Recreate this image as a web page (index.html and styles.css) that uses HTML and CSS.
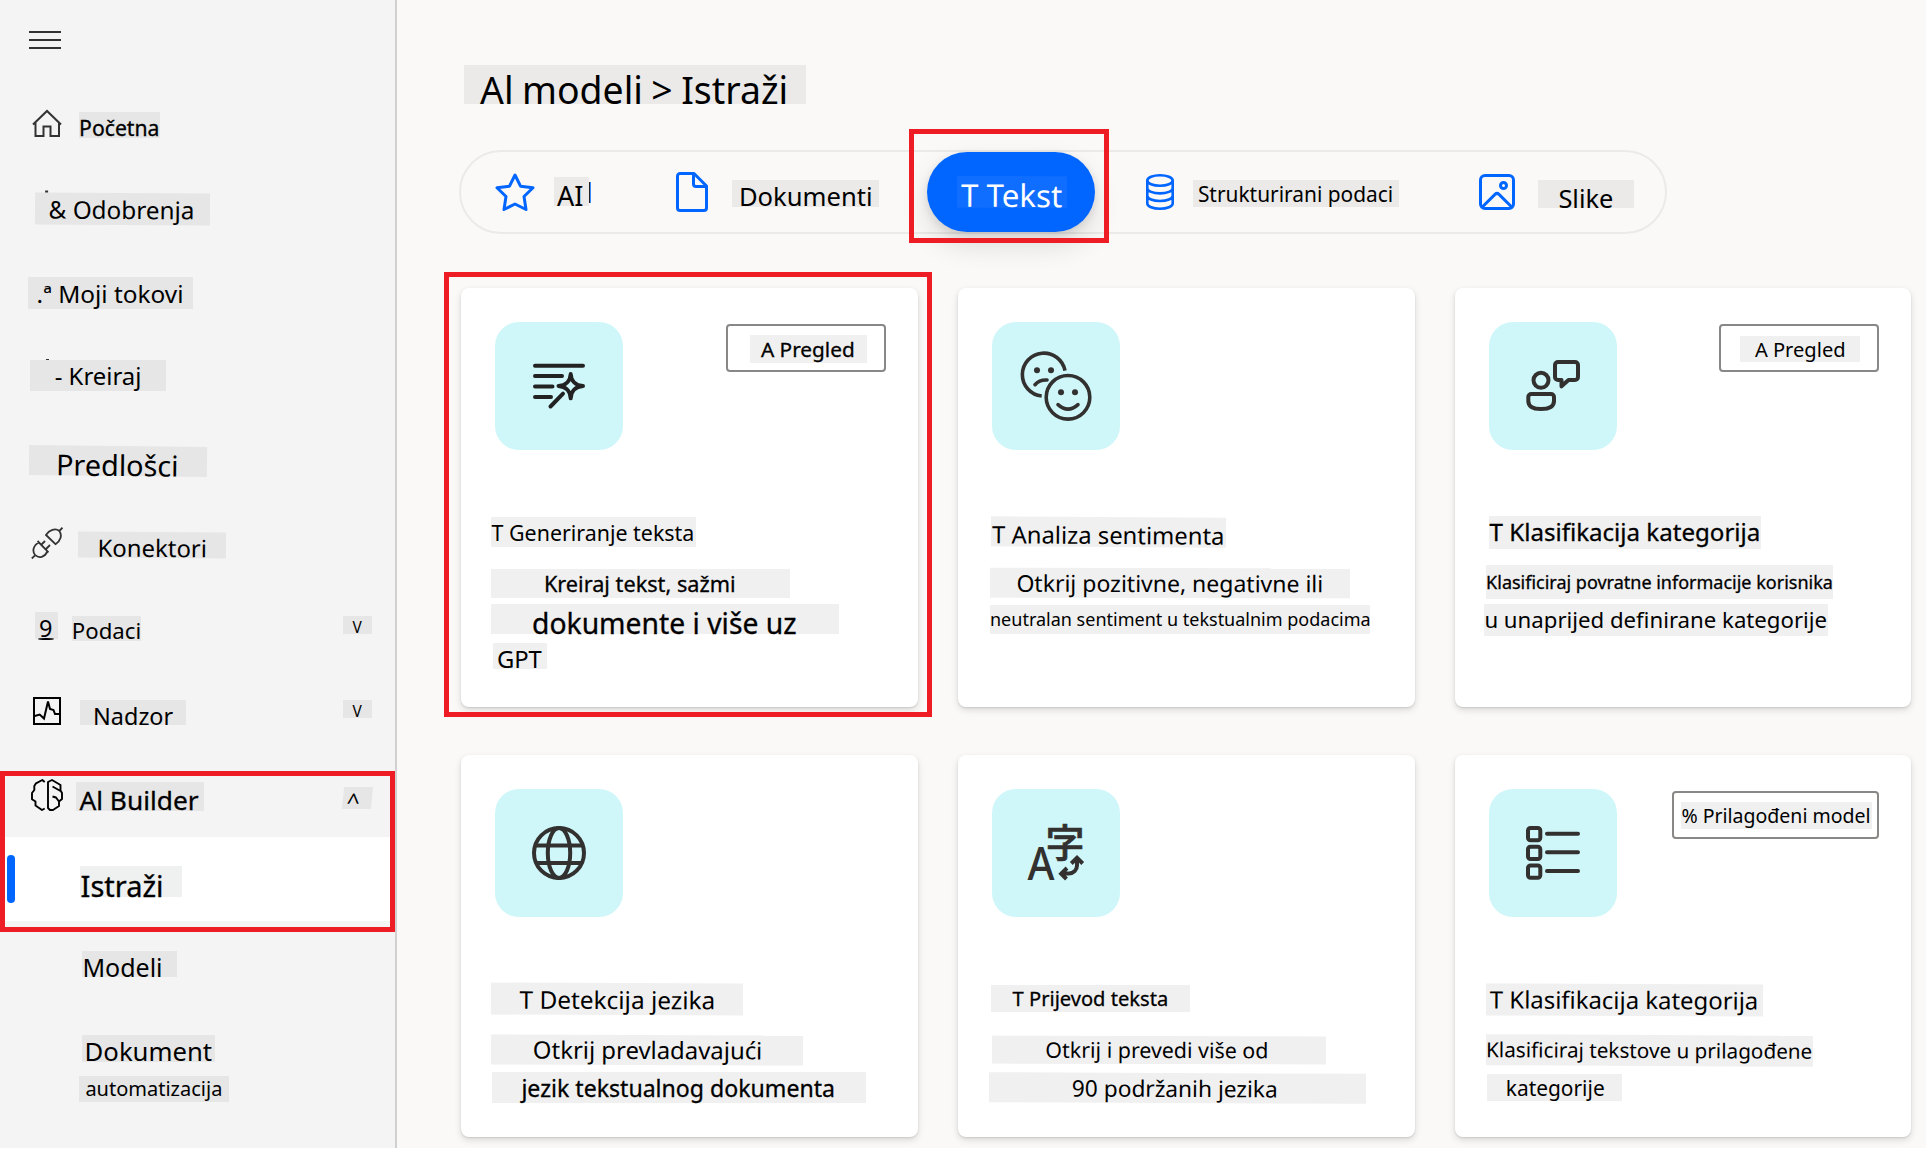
FILE: index.html
```html
<!DOCTYPE html>
<html lang="hr">
<head>
<meta charset="utf-8">
<title>AI Builder</title>
<link rel="stylesheet" href="styles.css">
</head>
<body>
<div class="app">
  <nav class="sidebar">
    <button class="burger" aria-label="Izbornik"><i></i><i></i><i></i></button>
    <ul class="nav">
      <li class="row">
        <svg class="ico ico-home" width="30" height="30" viewBox="0 0 30 30"><path d="M1 15.500 15 2l14 13.500M3.500 13.500V27h8V17.500h7V27H27V13.500"/></svg>
        <span class="label strong n-home">Početna</span>
      </li>
      <li class="row"><span class="label n-approve speck">&amp; Odobrenja</span></li>
      <li class="row"><span class="label n-flows">.ª Moji tokovi</span></li>
      <li class="row"><span class="label n-create speck">- Kreiraj</span></li>
      <li class="row"><span class="label n-templates">Predlošci</span></li>
      <li class="row">
        <svg class="ico ico-plug" width="32" height="32" viewBox="0 0 32 32"><path d="M31.500.7 28.300 4M15 8l9.500 9.200c5-3 7-9 3.800-13.200C24.500.8 18 3 15 8zM6.500 14l11 11.300M10.500 17.500 14 14M15 22l4-4M8 15.500c-6 3-7 9-3.800 12.700 3.800 3.400 9.800 2 12-3.500M.8 31.500l3.500-3.300"/></svg>
        <span class="label n-connect">Konektori</span>
      </li>
      <li class="row">
        <span class="label n-nine">9</span>
        <span class="label n-data">Podaci</span>
        <span class="label chev chev-data">V</span>
      </li>
      <li class="row">
        <svg class="ico ico-monitor" width="28" height="28" viewBox="0 0 28 28"><path d="M1 1h26v26H1zM1.700 19l5-1.500L11 21.500 15 4.500 17 12l3.500 1L22 17h5"/></svg>
        <span class="label n-monitor">Nadzor</span>
        <span class="label chev chev-monitor">V</span>
      </li>
      <li class="row">
        <svg class="ico ico-brain" width="32" height="32" viewBox="0 0 32 32"><path d="M13.700 3 11.300 1 5 4.300 3.300 7v4L1 14v6.200l3.500 2.300v4L11 31l2.700-1.500M17 3v26l2 2h3l6-4v-4.500l3-2.500v-6l-1.500-2.500V6l-8.500-5zM21.500 7.500l8 4.500M21.500 17.500l3.500 1 3 4"/></svg>
        <span class="label strong n-builder">Al Builder</span>
        <span class="label chev chev-builder">^</span>
      </li>
      <li class="row selected"><span class="label strong n-explore">Istraži</span></li>
      <li class="row"><span class="label n-models">Modeli</span></li>
      <li class="row stack">
        <span class="label n-doc">Dokument</span>
        <span class="label n-auto">automatizacija</span>
      </li>
    </ul>
    <div class="mark mark-nav"></div>
  </nav>

  <main class="main">
    <h1 class="label heading">Al modeli &gt; Istraži</h1>

    <div class="tabs">
      <svg class="tico tico-star" width="40" height="40" viewBox="0 0 40 40"><path d="M20 3l5.500 11.200L38 15.700l-9 8.800 2 13L20 32 9 37.500l2-13-9-8.800 12.500-1.500z"/></svg>
      <span class="label t-ai">AI</span><i class="caret"></i>
      <svg class="tico tico-doc" width="32" height="40" viewBox="0 0 32 40"><path d="M4 1.500h14L30.500 14v22.000a2.500 2.500 0 0 1-2.500 2.500H4A2.500 2.500 0 0 1 1.500 36V4A2.500 2.500 0 0 1 4 1.500zM17.500 1.500V12a2.500 2.500 0 0 0 2.500 2.500h10.500"/></svg>
      <span class="label t-docs">Dokumenti</span>
      <div class="tab-active"><span class="label t-text">T Tekst</span><div class="mark mark-tab"></div></div>
      <svg class="tico tico-db" width="28" height="36" viewBox="0 0 28 36"><g class="thin"><ellipse cx="14" cy="6.500" rx="12.700" ry="5.200"/><path d="M1.300 6.500v23.000c0 2.900 5.700 5.200 12.700 5.200s12.700-2.300 12.700-5.200v-23M1.300 14.200c0 2.900 5.700 5.200 12.700 5.200s12.700-2.300 12.700-5.200M1.300 21.800c0 2.900 5.700 5.200 12.700 5.200s12.700-2.300 12.700-5.200"/></g></svg>
      <span class="label t-struct">Strukturirani podaci</span>
      <svg class="tico tico-img" width="36" height="36" viewBox="0 0 36 36"><rect x="1.500" y="1.500" width="33" height="33" rx="4.500"/><circle cx="24.500" cy="11.500" r="3"/><path d="M3 33.200 16 20.400a2.900 2.900 0 0 1 4 0L33 33.200"/></svg>
      <span class="label t-img">Slike</span>
    </div>

    <section class="grid">
      <article class="card">
        <div class="head">
          <svg class="tile" viewBox="0 0 128 128"><g class="dark"><path d="M40 43.700h48M40 54h27M40 64.500h17.500M40 75h16M68 71.700 55.500 84.500"/><path d="M75.700 52C76 59 80.700 63.500 88 64c-7.300.5-12 5-12.300 12.300C75.400 69 70.700 64.500 63.500 64c7.200-.5 11.900-5 12.200-12z"/></g></svg>
          <div class="badge"><span class="label strong b-1">A Pregled</span></div>
        </div>
        <h2 class="label c1-t">T Generiranje teksta</h2>
        <span class="label strong c1-a">Kreiraj tekst, sažmi</span>
        <span class="label strong c1-b">dokumente i više uz</span>
        <span class="label c1-c">GPT</span>
        <div class="mark mark-card"></div>
      </article>
      <article class="card">
        <div class="head">
          <svg class="tile" viewBox="0 0 128 128"><g class="warm face"><path d="M73 48.700A21.500 21.500 0 1 0 49.700 74"/><path class="round" d="M43 62.700Q47.500 57.500 55 58M66 82.700q10 9 20 0"/><circle cx="76" cy="75.300" r="21.800"/></g><g class="dots"><circle cx="45" cy="48.300" r="3"/><circle cx="59" cy="48.300" r="3"/><circle cx="69" cy="70.300" r="3"/><circle cx="83" cy="70.300" r="3"/></g></svg>
        </div>
        <h2 class="label c2-t">T Analiza sentimenta</h2>
        <span class="label c2-a">Otkrij pozitivne, negativne ili</span>
        <span class="label c2-b">neutralan sentiment u tekstualnim podacima</span>
      </article>
      <article class="card">
        <div class="head">
          <svg class="tile" viewBox="0 0 128 128"><g class="warm"><circle cx="52" cy="58.300" r="7.500"/><path d="M42.500 72H62a3 3 0 0 1 3 3v4c0 6-6 8-13 8s-12.700-2-12.700-8v-4a3 3 0 0 1 3-3zM69 40h17a3 3 0 0 1 3 3v12a3 3 0 0 1-3 3h-6.500l-7 6.300V58H69a3 3 0 0 1-3-3V43a3 3 0 0 1 3-3z"/></g></svg>
          <div class="badge"><span class="label b-3">A Pregled</span></div>
        </div>
        <h2 class="label strong c3-t">T Klasifikacija kategorija</h2>
        <span class="label strong c3-a">Klasificiraj povratne informacije korisnika</span>
        <span class="label c3-b">u unaprijed definirane kategorije</span>
      </article>
      <article class="card">
        <div class="head">
          <svg class="tile" viewBox="0 0 128 128"><g class="warm"><circle cx="64" cy="64" r="25"/><ellipse cx="64" cy="64" rx="11.200" ry="25"/><path d="M41 56.500h46M42 74h44"/></g></svg>
        </div>
        <h2 class="label c4-t">T Detekcija jezika</h2>
        <span class="label c4-a">Otkrij prevladavajući</span>
        <span class="label strong c4-b">jezik tekstualnog dokumenta</span>
      </article>
      <article class="card">
        <div class="head">
          <svg class="tile" viewBox="0 0 128 128"><text class="latin" x="35.500" y="91" textLength="27" lengthAdjust="spacingAndGlyphs">A</text><text class="han" x="53.500" y="68">字</text><path class="swap" d="M85 70v6.500a8 8 0 0 1-8 8h-7M79.300 74.500l5.700-5.700 5.700 5.700M75 79l-5.800 5.700 5.300 5.300"/></svg>
        </div>
        <h2 class="label strong c5-t">T Prijevod teksta</h2>
        <span class="label c5-a">Otkrij i prevedi više od</span>
        <span class="label c5-b">90 podržanih jezika</span>
      </article>
      <article class="card">
        <div class="head">
          <svg class="tile" viewBox="0 0 128 128"><g class="warm"><rect x="39" y="39" width="12.300" height="12.300" rx="2.500"/><rect x="39" y="57.800" width="12.300" height="12.300" rx="2.500"/><rect x="39" y="76.500" width="12.300" height="12.300" rx="2.500"/><path class="round" d="M58 44.700h31M58 63.200h31M58 82h31"/></g></svg>
          <div class="badge wide"><span class="label b-6">% Prilagođeni model</span></div>
        </div>
        <h2 class="label c6-t">T Klasifikacija kategorija</h2>
        <span class="label c6-a">Klasificiraj tekstove u prilagođene</span>
        <span class="label c6-b">kategorije</span>
      </article>
    </section>
  </main>
</div>
</body>
</html>
```
FILE: styles.css
```css
* { box-sizing: border-box; }
body {
  margin: 0;
  background: #fff;
  color: #000;
  font-family: "Noto Sans", sans-serif;
  overflow: hidden;
}
.app { display: flex; width: 1926px; height: 1148px; }

/* Text chip: --b is the baseline, measured from the top of the chip */
.label {
  --bg: #e6e6e6;
  display: block;
  flex: none;
  width: var(--w);
  height: var(--h);
  margin: var(--mt, 0) 0 0 var(--ml, 0);
  background: var(--bg);
  font-size: var(--f);
  font-weight: 400;
  line-height: calc(2 * (var(--b) + 1px - 0.388 * var(--f)));
  text-indent: calc(var(--x, 0px) + 0.4px);
  white-space: nowrap;
}
.strong { -webkit-text-stroke: 0.3px #000; }
.mark { position: absolute; border: 5px solid #ee1c25; pointer-events: none; }

/* Sidebar */
.sidebar {
  position: relative;
  flex: none;
  width: 397px;
  background: #f4f4f4;
  border-right: 2px solid #d0d0d0;
}
.burger {
  display: flex;
  flex-direction: column;
  gap: 6px;
  width: 32px;
  height: 50px;
  margin: 31px 0 0 29px;
  padding: 0;
  border: 0;
  background: none;
}
.burger i { width: 32px; height: 2px; background: #333; }
.nav { margin: 0; padding: 0; list-style: none; }
.row { display: flex; align-items: flex-start; height: 84px; }
.row.stack { flex-direction: column; }
.row.selected {
  position: relative;
  width: 390px;
  background: #fff;
}
.row.selected::before {
  content: "";
  position: absolute;
  left: 7px;
  top: 18px;
  width: 8px;
  height: 48px;
  border-radius: 4px;
  background: #06f;
}
.mark-nav { left: 0; top: 771px; width: 395px; height: 161px; }

.ico { flex: none; fill: none; stroke: #333; stroke-width: 2; }
.ico-home { margin: 28px 0 0 32px; }
.ico-plug { margin: 26px 0 0 31px; stroke-width: 1.8; }
.ico-monitor { margin: 28px 0 0 33px; stroke: #000; }
.ico-brain { margin: 26px 0 0 31px; stroke: #000; stroke-width: 1.9; stroke-linejoin: round; }

.n-home { --w: 81px; --h: 26px; --f: 21.2px; --x: -0.3px; --b: 23px; --mt: 31px; --ml: 17px; }
.n-approve { --w: 175px; --h: 32px; --f: 24.3px; --x: 13.2px; --b: 25.7px; --mt: 28px; --ml: 35px; transform: rotate(0.35deg); }
.n-flows { --w: 165px; --h: 32px; --f: 24.4px; --x: 8.2px; --b: 25px; --mt: 28px; --ml: 28px; }
.n-create { --w: 136px; --h: 31px; --f: 23.9px; --x: 24.3px; --b: 24.5px; --mt: 27px; --ml: 30px; }
.n-templates { --w: 178px; --h: 30px; --f: 28.8px; --x: 26.7px; --b: 29px; --mt: 29px; --ml: 28.5px; transform: rotate(0.6deg); }
.n-connect { --w: 148px; --h: 26px; --f: 23.9px; --x: 19.2px; --b: 24.5px; --mt: 31px; --ml: 15px; transform: rotate(0.3deg); }
.n-nine { --w: 23px; --h: 27px; --f: 23.5px; --x: 3.5px; --b: 25px; --mt: 27px; --ml: 35px; position: relative; }
.n-nine::after { content: ""; position: absolute; left: 3px; top: 26px; width: 16px; height: 2px; border-radius: 50%; background: #000; }
.n-data { --w: 69px; --h: 25px; --f: 22.2px; --x: -0.6px; --b: 23px; --mt: 31px; --ml: 14px; }
.n-monitor { --w: 106px; --h: 25px; --f: 23.4px; --x: 12.7px; --b: 24.5px; --mt: 31px; --ml: 19px; }
.n-builder { --w: 128px; --h: 29px; --f: 26.3px; --x: 3px; --b: 28px; --mt: 29px; --ml: 13px; }
.n-explore { --w: 102px; --h: 31px; --f: 29px; --x: 0; --b: 30px; --mt: 29px; --ml: 80px; }
.n-explore { --x: 0.2px; }
.selected .n-explore { --bg: #eff1f1; }
.n-models { --w: 95px; --h: 26px; --f: 25px; --x: 0px; --b: 25px; --mt: 30px; --ml: 82px; }
.n-doc { --w: 133px; --h: 27px; --f: 25.7px; --x: 2.2px; --b: 26px; --mt: 30px; --ml: 82px; }
.n-auto { --w: 150px; --h: 26px; --f: 20px; --x: 6px; --b: 20px; --mt: 14px; --ml: 79px; }
.chev { --w: 29px; --h: 18px; --f: 15.5px; --x: 9px; --b: 16.5px; }
.chev-data { --mt: 31px; --ml: 202px; }
.chev-monitor { --mt: 31px; --ml: 157px; }
.chev-builder { --h: 22px; --f: 23px; --x: 3.5px; --b: 22.5px; --mt: 34px; --ml: 139px; transform: skewX(-6deg); }
.speck { position: relative; }
.speck::before { content: ""; position: absolute; left: 10px; top: -2px; width: 3px; height: 2px; background: #333; }
.n-create.speck::before { left: 16px; top: -1px; height: 1px; }

/* Main column */
.main { flex: 1; padding: 65px 0 0 62px; background: #faf9f8; }
.heading { --bg: #ebeae9; --w: 342px; --h: 39px; --f: 37.4px; --x: 15.6px; --b: 38px; --ml: 5px; word-spacing: -1.3px; }

.tabs {
  display: flex;
  align-items: flex-start;
  width: 1208px;
  height: 84px;
  margin-top: 46px;
  border: 2px solid #ebeae9;
  border-radius: 42px;
}
.tabs .label { --bg: #ebeae9; }
.tico { flex: none; fill: none; stroke: #06f; stroke-width: 3; stroke-linejoin: round; }
.tico .thin { stroke-width: 2.6; }
.tico-star { margin: 20px 0 0 34px; }
.tico-doc { margin: 20px 0 0 85px; }
.tico-db { margin: 22px 0 0 51px; }
.tico-img { margin: 22px 0 0 80px; }
.caret { width: 2px; height: 21px; margin-top: 30px; border-left: 1px solid #222; background: #3b8cff; }
.t-ai { --w: 35px; --h: 29px; --f: 27px; --x: 2.5px; --b: 28px; --mt: 25px; --ml: 19px; }
.t-docs { --w: 147px; --h: 27px; --f: 25.6px; --x: 6.5px; --b: 26px; --mt: 28px; --ml: 24px; }
.tab-active {
  position: relative;
  flex: none;
  width: 168px;
  height: 80px;
  margin-left: 48px;
  border-radius: 40px;
  background: #06f;
  color: #fff;
  box-shadow: 0 13px 28px rgba(0, 0, 0, 0.12), 0 3px 8px rgba(0, 0, 0, 0.1);
}
.tabs .t-text { --bg: #0f6dff; --w: 110px; --h: 32px; --f: 31.2px; --x: 3.8px; --b: 30.5px; --ml: 30px; transform: translateY(24px) rotate(0.3deg); }
.mark-tab { left: -18px; top: -23px; width: 200px; height: 114px; }
.t-struct { --w: 206px; --h: 27px; --f: 20.9px; --x: 4.5px; --b: 21.5px; --mt: 28px; --ml: 19px; }
.t-img { --w: 96px; --h: 28px; --f: 25.4px; --x: 20px; --b: 27px; --mt: 28px; --ml: 23px; }

/* Model cards */
.grid {
  display: grid;
  grid-template-columns: 457px 457px 456px;
  grid-template-rows: 419px 382px;
  gap: 48px 40px;
  margin: 54px 0 0 2px;
}
.card {
  position: relative;
  padding: 34px 32px 0 28px;
  border-radius: 8px;
  background: #fff;
  box-shadow: 0 3px 7px rgba(0, 0, 0, 0.13), 0 1px 2px rgba(0, 0, 0, 0.11);
}
.card .label { --bg: #f0f0f0; }
.mark-card { left: -17px; top: -16px; width: 488px; height: 445px; }
.head { display: flex; justify-content: space-between; height: 128px; padding-left: 6px; }
.tile { width: 128px; height: 128px; border-radius: 24px; background: #cff7f9; fill: none; }
.tile .dark, .tile .warm { stroke: #323130; stroke-width: 4; stroke-linejoin: round; }
.tile .dark { stroke: #222; stroke-linecap: round; }
.tile .round { stroke-linecap: round; }
.tile .face { stroke-width: 3.6; }
.tile .dots { fill: #323130; }
.tile .latin { fill: #323130; font: 500 44.8px "Noto Sans", sans-serif; }
.tile .han { fill: #323130; font: 500 39px "Noto Sans CJK JP", sans-serif; stroke: #323130; stroke-width: 0.7px; }
.tile .swap { stroke: #323130; stroke-width: 4; }
.badge {
  width: 160px;
  height: 48px;
  margin-top: 2px;
  border: 2px solid #8a8886;
  border-radius: 4px;
}
.badge.wide { width: 207px; }
.badge .label { margin-top: 0; transform: translateY(var(--dy)); }
.b-1 { --w: 117px; --h: 28px; --f: 20.8px; --x: 10.5px; --b: 22px; --ml: 22px; --dy: 9px; }
.b-3 { --w: 120px; --h: 26px; --f: 20.1px; --x: 14.5px; --b: 20.5px; --ml: 19px; --dy: 10px; }
.b-6 { --w: 191px; --h: 27px; --f: 19.5px; --x: 0px; --b: 20.5px; --ml: 7px; --dy: 9px; }

.c1-t { --w: 205px; --h: 30px; --f: 21.4px; --x: 0.2px; --b: 23px; --mt: 67px; --ml: 2px; }
.c1-a { --w: 299px; --h: 29px; --f: 21.7px; --x: 52.5px; --b: 22.5px; --mt: 22px; --ml: 2px; }
.c1-b { --w: 348px; --h: 30px; --f: 28.3px; --x: 40.6px; --b: 29.3px; --mt: 6px; --ml: 2px; }
.c1-c { --w: 54px; --h: 26px; --f: 23.8px; --x: 3.5px; --b: 25px; --mt: 9px; --ml: 4px; }
.c2-t { --w: 235px; --h: 30px; --f: 23.8px; --x: 0.8px; --b: 26.5px; --mt: 67px; --ml: 5px; transform: rotate(0.35deg); }
.c2-a { --w: 360px; --h: 30px; --f: 23px; --x: 26px; --b: 23.5px; --mt: 21px; --ml: 4px; transform: rotate(0.1deg); }
.c2-b { --w: 380px; --h: 29px; --f: 18px; --x: -0.4px; --b: 20.5px; --mt: 7px; --ml: 4px; }
.c3-t { --w: 272px; --h: 33px; --f: 24.1px; --x: 0.2px; --b: 24.7px; --mt: 66px; --ml: 6px; }
.c3-a { --w: 347px; --h: 34px; --f: 18px; --x: -0.3px; --b: 23.5px; --mt: 16px; --ml: 3px; }
.c3-b { --w: 344px; --h: 32px; --f: 22.2px; --x: 0px; --b: 24px; --mt: 5px; --ml: 1px; }
.c4-t { --w: 252px; --h: 32px; --f: 24.4px; --x: 28.2px; --b: 25.2px; --mt: 66px; --ml: 2px; transform: rotate(0.2deg); }
.c4-a { --w: 312px; --h: 30px; --f: 23.9px; --x: 41.5px; --b: 23.5px; --mt: 20px; --ml: 2px; transform: rotate(0.2deg); }
.c4-b { --w: 374px; --h: 31px; --f: 23.1px; --x: 29px; --b: 24px; --mt: 7px; --ml: 3px; }
.c5-t { --w: 199px; --h: 27px; --f: 20.1px; --x: 21.2px; --b: 21px; --mt: 68px; --ml: 5px; }
.c5-a { --w: 334px; --h: 28px; --f: 21.4px; --x: 53px; --b: 21.7px; --mt: 24px; --ml: 6px; transform: rotate(0.15deg); }
.c5-b { --w: 377px; --h: 30px; --f: 22.7px; --x: 82.5px; --b: 23.5px; --mt: 9px; --ml: 3px; transform: rotate(0.25deg); }
.c6-t { --w: 277px; --h: 32px; --f: 23.9px; --x: 3.5px; --b: 24.5px; --mt: 67px; --ml: 3px; transform: rotate(0.25deg); }
.c6-a { --w: 327px; --h: 31px; --f: 20.7px; --x: -0.3px; --b: 23px; --mt: 19px; --ml: 3px; transform: rotate(0.3deg); }
.c6-b { --w: 135px; --h: 27px; --f: 20.9px; --x: 18.4px; --b: 21.3px; --mt: 8px; --ml: 4px; }
```
